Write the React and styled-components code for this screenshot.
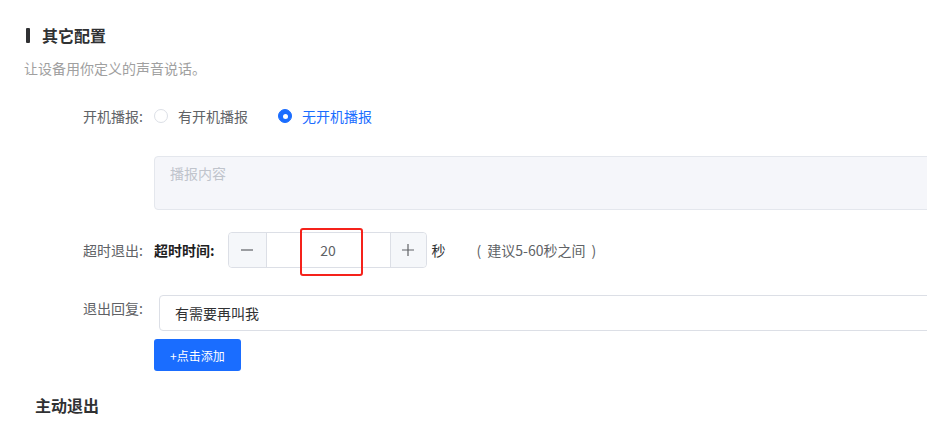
import React from "react";
import styled, { createGlobalStyle } from "styled-components";

const GlobalStyle = createGlobalStyle`
    html, body {
        margin: 0;
        padding: 0;
        background: #ffffff;
        overflow: hidden;
    }
    body {
        font-family: "Noto Sans CJK SC", "Microsoft YaHei", sans-serif;
        color: #303133;
    }
    * {
        box-sizing: border-box;
    }
`

const Page = styled.div`
    padding: 25px 0 0 24px;
    width: 1100px;
`

const SectionTitle = styled.div`
    display: flex;
    align-items: center;
    height: 20px;
    font-size: 16px;
    font-weight: 700;
    color: #303133;
    &::before {
        content: "";
        display: block;
        width: 4px;
        height: 15px;
        margin: 0 12px 0 2px;
        border-radius: 1px;
        background: #303133;
    }
`

const SubTitle = styled.div`
    margin-top: 13px;
    font-size: 14px;
    line-height: 20px;
    color: #a0a0a0;
`

const FormRow = styled.div`
    display: flex;
    align-items: ${props => props.top ? 'flex-start' : 'center'};
    margin-top: ${props => props.gap}px;
`

const Label = styled.div`
    width: 130px;
    padding-right: 11px;
    text-align: right;
    flex-shrink: 0;
    font-size: 14px;
    line-height: ${props => props.top ? '26px' : '20px'};
    color: #606266;
`

const RadioGroup = styled.div`
    display: flex;
    align-items: center;
    gap: 30px;
`

const RadioItem = styled.label`
    display: flex;
    align-items: center;
    gap: 10px;
    font-size: 14px;
    line-height: 20px;
    color: ${props => props.checked ? '#1a6dff' : '#606266'};
    cursor: pointer;
`

const RadioDot = styled.span`
    position: relative;
    width: 14px;
    height: 14px;
    border-radius: 50%;
    border: 1px solid ${props => props.checked ? '#1a6dff' : '#dcdfe6'};
    background: ${props => props.checked ? '#1a6dff' : '#ffffff'};
    &::after {
        content: "";
        display: ${props => props.checked ? 'block' : 'none'};
        position: absolute;
        left: 50%;
        top: 50%;
        width: 5px;
        height: 5px;
        margin: -2.5px 0 0 -2.5px;
        border-radius: 50%;
        background: #ffffff;
    }
`

const TextArea = styled.div`
    margin: 30px 0 0 130px;
    width: 820px;
    height: 54px;
    padding: 6px 15px;
    border: 1px solid #e4e7ed;
    border-radius: 4px;
    background: #f5f6fa;
    font-size: 14px;
    line-height: 20px;
    color: #c0c4cc;
`

const BoldLabel = styled.div`
    font-size: 14px;
    font-weight: 700;
    color: #1f1f1f;
    margin-right: 13px;
`

const Stepper = styled.div`
    position: relative;
    display: flex;
    width: 199px;
    height: 36px;
    border: 1px solid #dcdfe6;
    border-radius: 4px;
`

const StepButton = styled.div`
    display: flex;
    align-items: center;
    justify-content: center;
    width: ${props => props.w}px;
    background: #f5f7fa;
    color: #606266;
    border-${props => props.side}: 1px solid #dcdfe6;
    border-radius: ${props => props.side === 'right' ? '4px 0 0 4px' : '0 4px 4px 0'};
`

const StepValue = styled.div`
    flex: 1;
    display: flex;
    align-items: center;
    justify-content: center;
    font-size: 14px;
    color: #606266;
`

const Highlight = styled.div`
    position: absolute;
    left: 71px;
    top: -5px;
    width: 63px;
    height: 48px;
    border: 2px solid #f5221b;
    border-radius: 3px;
    pointer-events: none;
`

const Unit = styled.span`
    margin-left: 5px;
    font-size: 14px;
    color: #303133;
`

const Hint = styled.span`
    margin-left: 25px;
    font-size: 14px;
    color: #606266;
`

const Paren = styled.span`
    margin: 0 6px;
`

const TextInput = styled.div`
    margin-left: 5px;
    width: 820px;
    height: 36px;
    padding: 0 15px;
    display: flex;
    align-items: center;
    border: 1px solid #dcdfe6;
    border-radius: 4px;
    font-size: 14px;
    color: #303133;
`

const AddButton = styled.button`
    display: block;
    margin: 8px 0 0 130px;
    height: 32px;
    padding: 0 16px;
    border: none;
    border-radius: 3px;
    background: #1a6dff;
    color: #ffffff;
    font-family: inherit;
    font-size: 12px;
    cursor: pointer;
`

const SubHeading = styled.div`
    margin: 23px 0 0 11px;
    font-size: 16px;
    line-height: 22px;
    font-weight: 700;
    color: #303133;
`

const Minus = () => (
    <svg width="14" height="14" viewBox="0 0 14 14">
        <path d="M1 7h12" stroke="#606266" strokeWidth="1.2" />
    </svg>
)

const Plus = () => (
    <svg width="14" height="14" viewBox="0 0 14 14">
        <path d="M1 7h12M7 1v12" stroke="#606266" strokeWidth="1.2" />
    </svg>
)

const App = () => {
    return(
        <>
            <GlobalStyle />
            <Page>
                <SectionTitle>其它配置</SectionTitle>
                <SubTitle>让设备用你定义的声音说话。</SubTitle>

                <FormRow gap={28}>
                    <Label>开机播报:</Label>
                    <RadioGroup>
                        <RadioItem><RadioDot />有开机播报</RadioItem>
                        <RadioItem checked><RadioDot checked />无开机播报</RadioItem>
                    </RadioGroup>
                </FormRow>

                <TextArea>播报内容</TextArea>

                <FormRow gap={22}>
                    <Label>超时退出:</Label>
                    <BoldLabel>超时时间:</BoldLabel>
                    <Stepper>
                        <StepButton w={38} side="right"><Minus /></StepButton>
                        <StepValue>20</StepValue>
                        <StepButton w={36} side="left"><Plus /></StepButton>
                        <Highlight />
                    </Stepper>
                    <Unit>秒</Unit>
                    <Hint><Paren>(</Paren>建议5-60秒之间<Paren>)</Paren></Hint>
                </FormRow>

                <FormRow gap={27} top>
                    <Label top>退出回复:</Label>
                    <TextInput>有需要再叫我</TextInput>
                </FormRow>

                <AddButton>+点击添加</AddButton>

                <SubHeading>主动退出</SubHeading>
            </Page>
        </>
    )
}

export default App
